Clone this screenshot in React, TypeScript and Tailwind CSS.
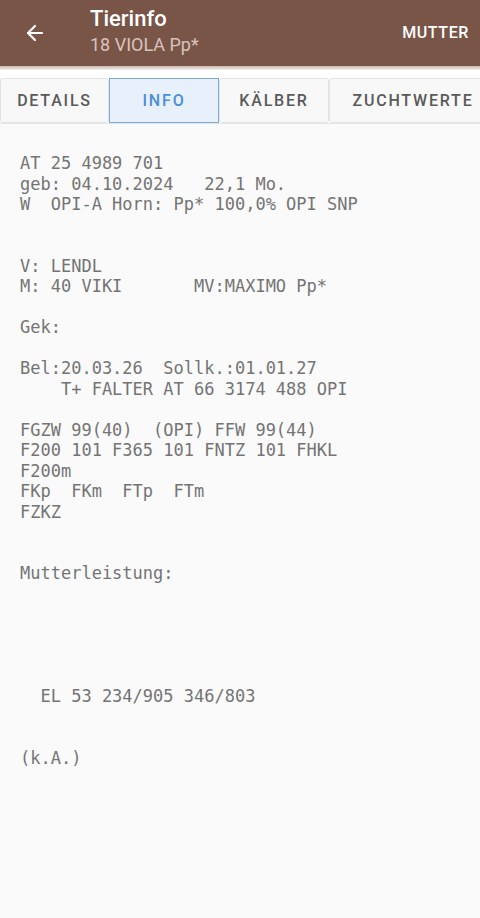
import { ArrowLeft } from "lucide-react";

const lines: string[] = [
  "AT 25 4989 701",
  "geb: 04.10.2024   22,1 Mo.",
  "W  OPI-A Horn: Pp* 100,0% OPI SNP",
  "",
  "",
  "V: LENDL",
  "M: 40 VIKI       MV:MAXIMO Pp*",
  "",
  "Gek:",
  "",
  "Bel:20.03.26  Sollk.:01.01.27",
  "    T+ FALTER AT 66 3174 488 OPI",
  "",
  "FGZW 99(40)  (OPI) FFW 99(44)",
  "F200 101 F365 101 FNTZ 101 FHKL",
  "F200m",
  "FKp  FKm  FTp  FTm",
  "FZKZ",
  "",
  "",
  "Mutterleistung:",
  "",
  "",
  "",
  "",
  "",
  "  EL 53 234/905 346/803",
  "",
  "",
  "(k.A.)",
];

const tabs = [
  { label: "DETAILS", w: "w-[109px]" },
  { label: "INFO", w: "w-[110px]", active: true },
  { label: "KÄLBER", w: "w-[110px]" },
  { label: "ZUCHTWERTE", w: "w-[168px]" },
];

export default function App() {
  return (
    <div className="min-h-[918px] bg-[#fafafa] font-['Roboto',sans-serif]">
      <header className="h-[66px] bg-[#795548] flex items-center text-white">
        <div className="w-[70px] flex justify-center">
          <ArrowLeft className="size-6" strokeWidth={2.2} />
        </div>
        <div className="grow flex flex-col pl-5 -mt-1">
          <span className="text-[22px] font-medium leading-[28px]">Tierinfo</span>
          <span className="text-[18px] leading-[24px] text-[#d9c3bb]">18 VIOLA Pp*</span>
        </div>
        <span className="text-[16px] font-medium tracking-[0.6px] pr-[11px]">MUTTER</span>
      </header>
      <div className="h-[4px] bg-gradient-to-b from-[#cbb8b1] to-[#f4eeeb]" />
      <div className="bg-white pt-[8px] overflow-hidden">
        <div className="flex w-[520px] h-[46px] border-b border-[#e6e6e6]">
          {tabs.map((t) => (
            <div
              key={t.label}
              className={
                t.active
                  ? `${t.w} shrink-0 flex items-center justify-center border border-[#7aa9dd] bg-[#e8f1fb] text-[#4a8fd6] text-[16px] font-medium tracking-[1.8px]`
                  : `${t.w} shrink-0 flex items-center justify-center border border-[#e3e3e3] bg-[#f8f8f8] text-[#5a5a5a] text-[16px] font-medium tracking-[1.8px] rounded-[3px]`
              }
            >
              {t.label}
            </div>
          ))}
        </div>
      </div>
      <pre className="pt-[29px] pl-5 font-['DejaVu_Sans_Mono',monospace] text-[17px] leading-[20.5px] text-[#747474]">
        {lines.join("\n")}
      </pre>
    </div>
  );
}
